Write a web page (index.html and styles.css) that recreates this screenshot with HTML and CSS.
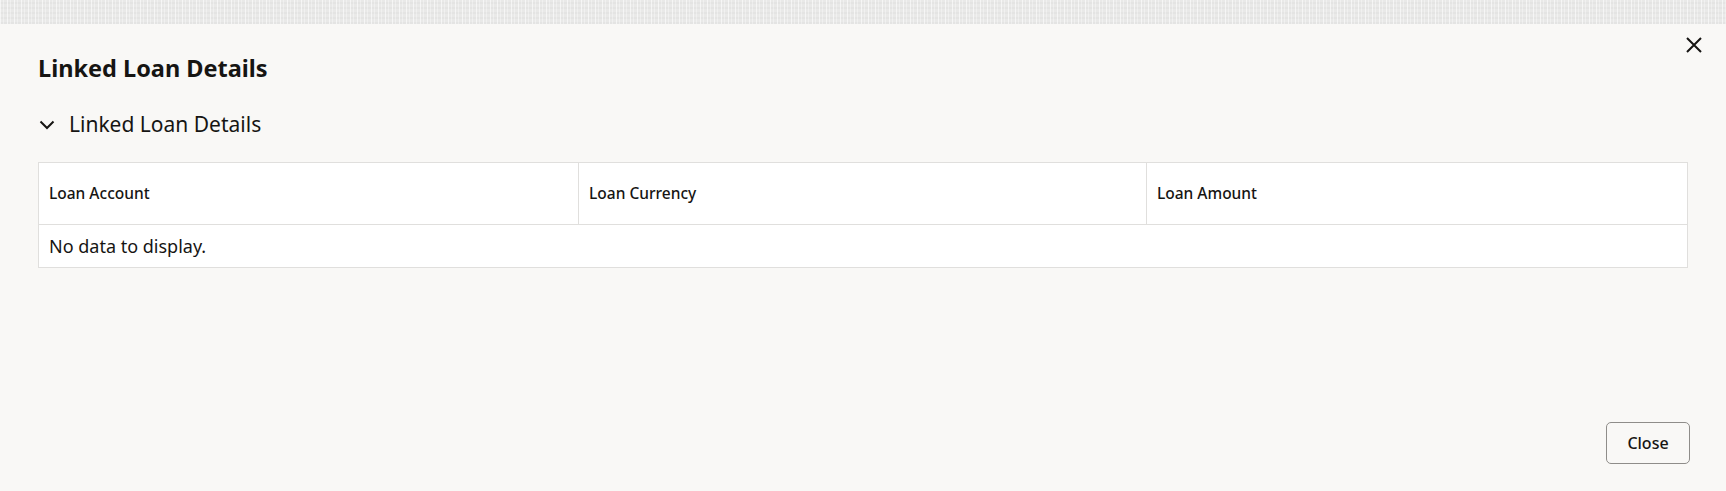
FILE: index.html
```html
<!DOCTYPE html>
<html lang="en">
<head>
  <meta charset="UTF-8">
  <meta name="viewport" content="width=device-width, initial-scale=1.0">
  <title>Linked Loan Details</title>
  <link rel="stylesheet" href="styles.css">
</head>
<body>
  <div class="backdrop"></div>
  <div class="dialog">
    <button class="dialog-x" aria-label="Close">
      <svg width="16" height="16" viewBox="0 0 16 16">
        <path d="M1 1 L15 15 M15 1 L1 15" stroke="#161513" stroke-width="2" fill="none"/>
      </svg>
    </button>

    <div class="dialog-body">
      <h1 class="dialog-title">Linked Loan Details</h1>

      <div class="section-head">
        <svg class="chevron" width="16" height="10" viewBox="0 0 16 10">
          <path d="M1.5 1.5 L8 8 L14.5 1.5" stroke="#161513" stroke-width="2" fill="none"/>
        </svg>
        <h2>Linked Loan Details</h2>
      </div>

      <table class="grid">
        <thead>
          <tr>
            <th class="col-account">Loan Account</th>
            <th class="col-currency">Loan Currency</th>
            <th class="col-amount">Loan Amount</th>
          </tr>
        </thead>
        <tbody>
          <tr>
            <td colspan="3">No data to display.</td>
          </tr>
        </tbody>
      </table>
    </div>

    <div class="dialog-footer">
      <button class="btn">Close</button>
    </div>
  </div>
</body>
</html>
```

FILE: styles.css
```css
html, body {
  margin: 0;
  padding: 0;
  height: 100%;
}
body {
  font-family: "Noto Sans", "Open Sans", sans-serif;
  color: #161513;
  background-color: #f9f8f6;
  overflow: hidden;
}
.backdrop {
  height: 24px;
  background-color: #e9e9e8;
  background-image:
    repeating-linear-gradient(90deg, rgba(255,255,255,0.6) 0 1px, transparent 1px 3px, rgba(255,255,255,0.35) 3px 4px, transparent 4px 7px),
    repeating-linear-gradient(0deg, rgba(0,0,0,0.025) 0 2px, transparent 2px 5px);
}
.dialog {
  position: relative;
  height: 467px;
  display: flex;
  flex-direction: column;
  background-color: #f9f8f6;
}
.dialog-x {
  position: absolute;
  top: 5px;
  right: 16px;
  width: 32px;
  height: 32px;
  padding: 0;
  border: none;
  background: transparent;
  display: flex;
  align-items: center;
  justify-content: center;
  cursor: pointer;
}
.dialog-body {
  flex: 1;
  padding: 28px 38px 0 38px;
}
.dialog-title {
  margin: 0;
  font-size: 23.5px;
  line-height: 32px;
  font-weight: 700;
}
.section-head {
  display: flex;
  align-items: center;
  margin-top: 26px;
  height: 28px;
}
.chevron {
  margin-left: 1px;
  margin-right: 14px;
  margin-top: 1px;
}
.section-head h2 {
  margin: 0;
  font-size: 21px;
  line-height: 28px;
  font-weight: 400;
}
.grid {
  width: 100%;
  margin-top: 24px;
  border-collapse: collapse;
  table-layout: fixed;
  background: #fff;
}
.grid th,
.grid td {
  border: 1px solid #e0dfdd;
  text-align: left;
}
.grid th {
  padding: 20px 10px 21px;
  font-size: 15.5px;
  line-height: 20px;
  font-weight: 500;
}
.grid td {
  padding: 9px 10px;
  font-size: 18px;
  line-height: 24px;
  font-weight: 400;
}
.col-account { width: 32.73%; }
.col-currency { width: 34.48%; }
.col-amount { width: 32.79%; }
.dialog-footer {
  display: flex;
  justify-content: flex-end;
  padding: 0 36px 27px 0;
}
.btn {
  width: 84px;
  height: 42px;
  border: 1px solid #8f8d8a;
  border-radius: 5px;
  background: transparent;
  font-family: "Noto Sans", sans-serif;
  font-size: 16px;
  font-weight: 500;
  color: #161513;
  cursor: pointer;
}
```
